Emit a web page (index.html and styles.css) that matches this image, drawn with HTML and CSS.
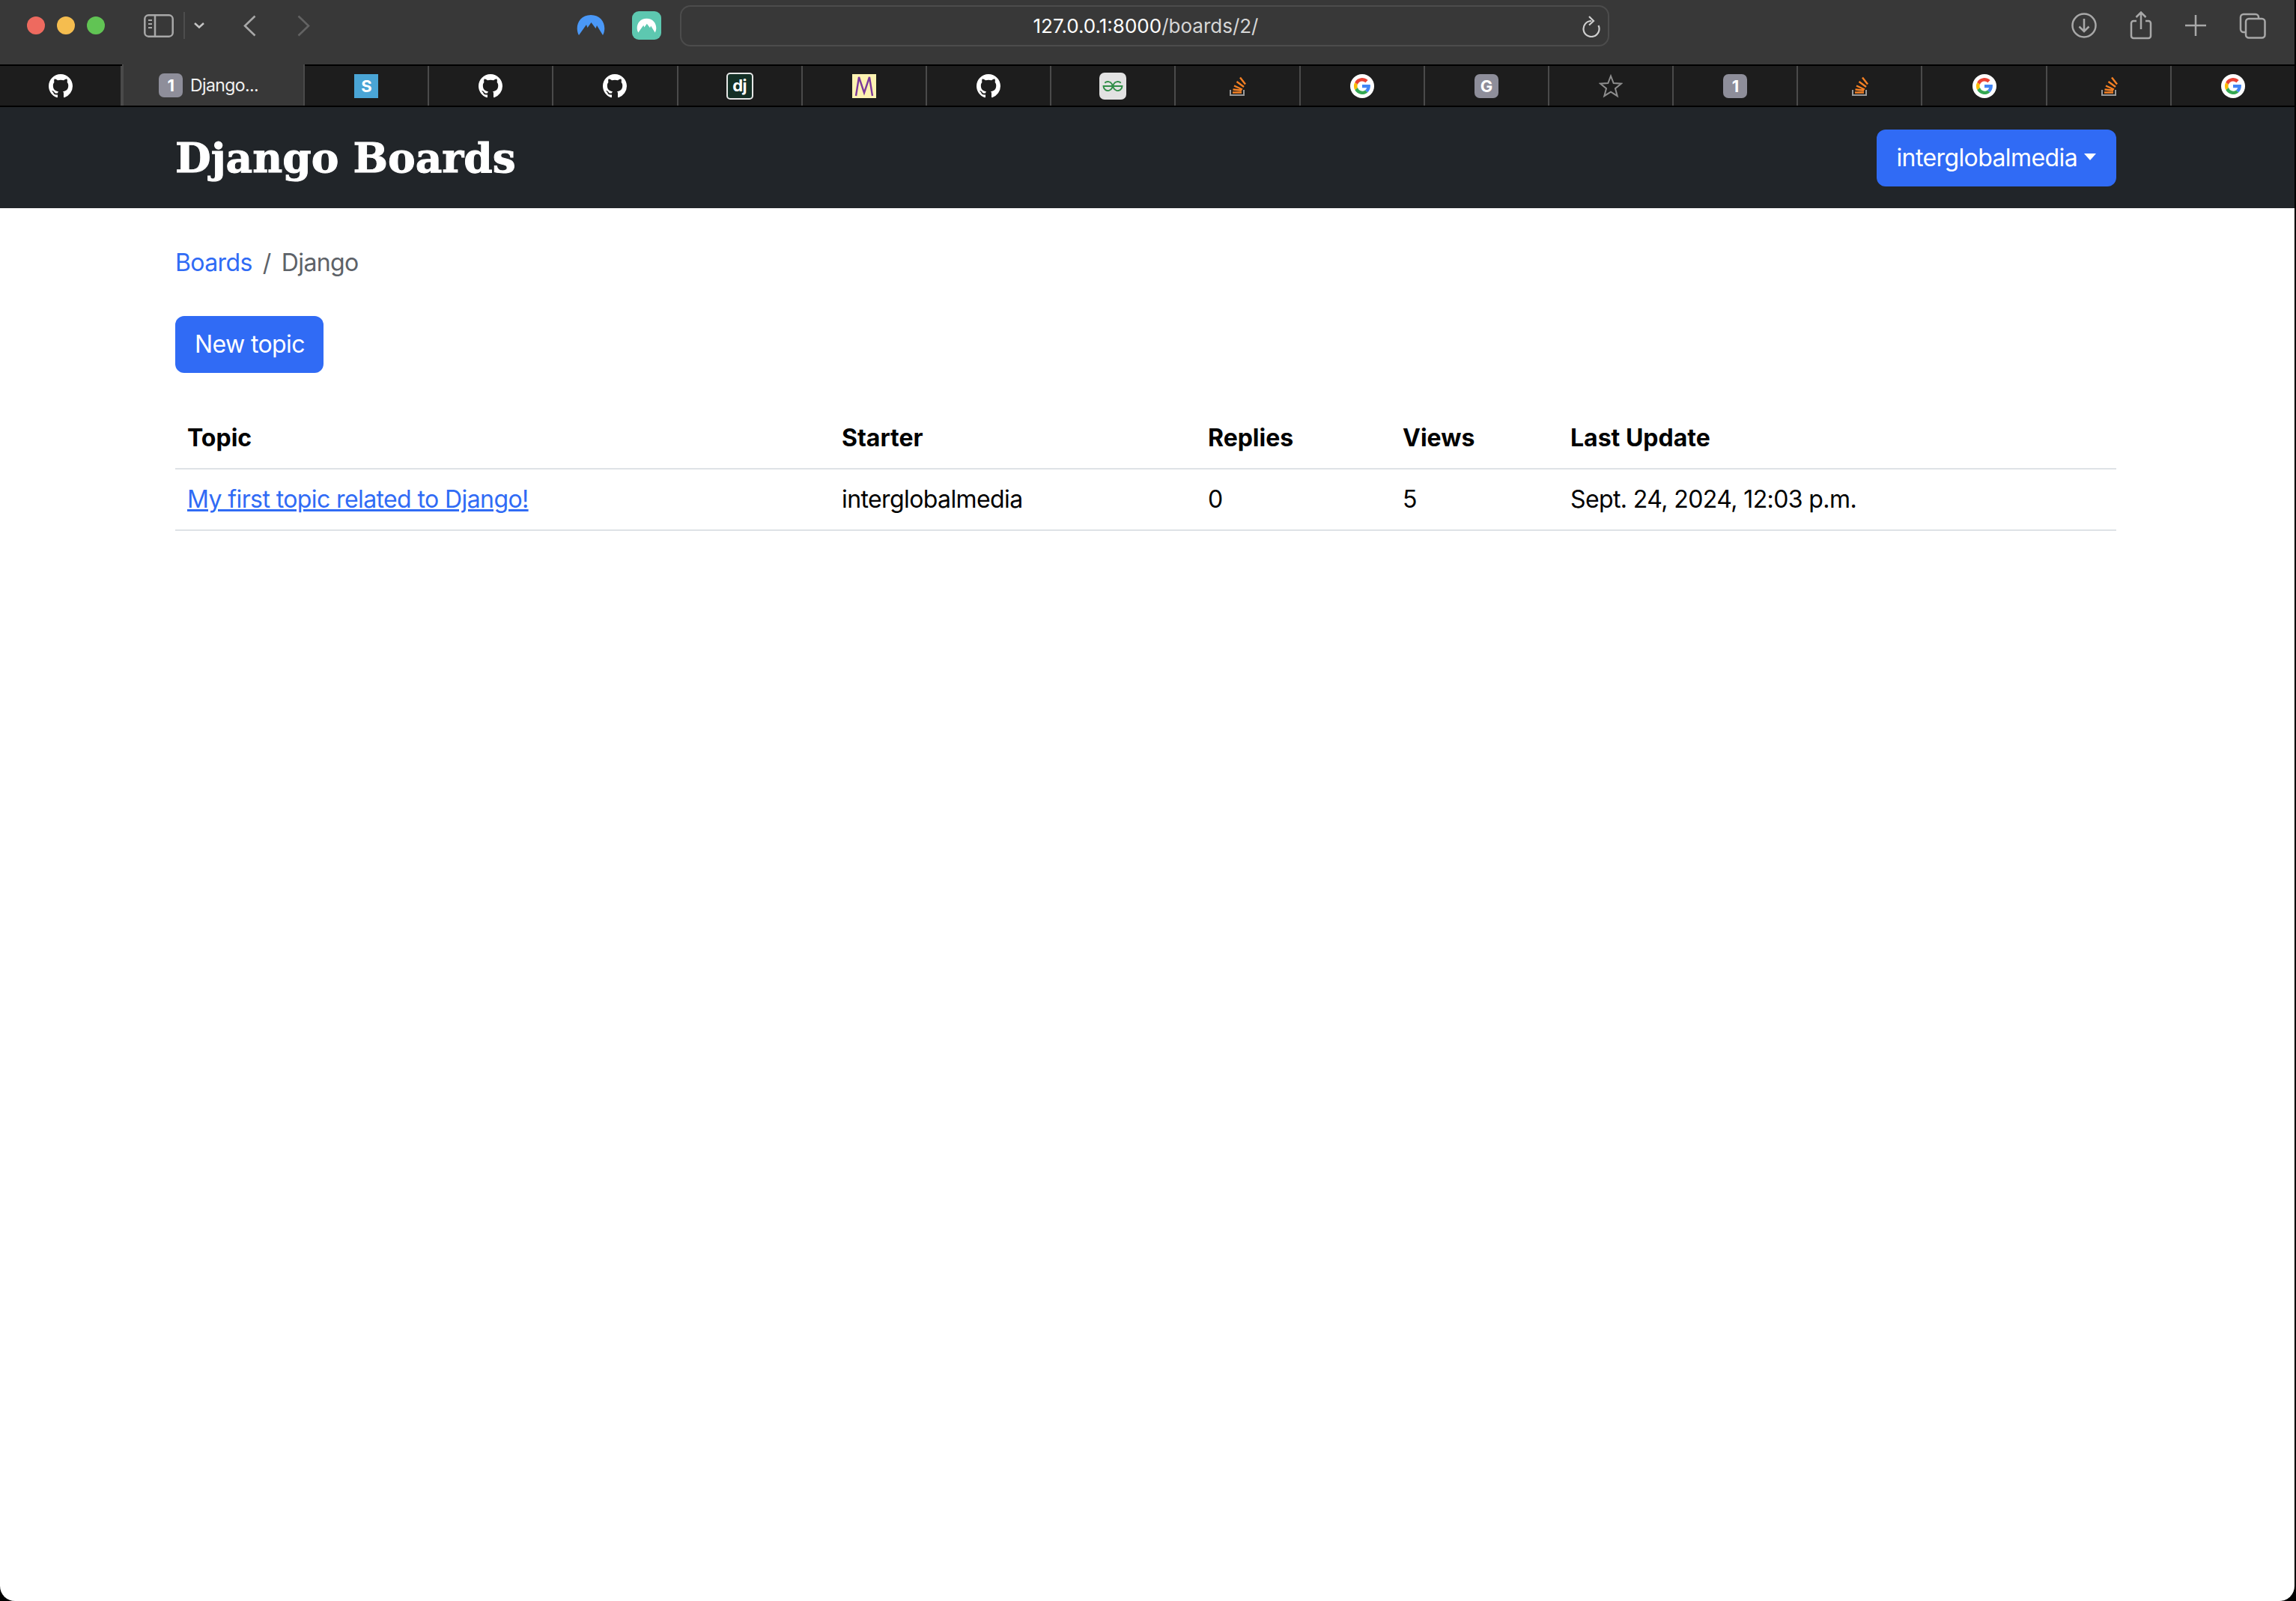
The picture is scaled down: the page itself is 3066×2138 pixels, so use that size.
FILE: index.html
```html
<!DOCTYPE html>
<html lang="en">
<head>
    <meta charset="UTF-8">
    <meta name="viewport" content="width=device-width, initial-scale=1.0">
    <title>Django Boards</title>
    <link rel="stylesheet" href="styles.css">
</head>
<body>
    <svg class="icon-defs" width="0" height="0" aria-hidden="true">
        <symbol id="gh" viewBox="0 0 16 16">
            <path fill="#fff" d="M8 0C3.58 0 0 3.58 0 8c0 3.54 2.29 6.53 5.47 7.59.4.07.55-.17.55-.38 0-.19-.01-.82-.01-1.49-2.01.37-2.53-.49-2.69-.94-.09-.23-.48-.94-.82-1.13-.28-.15-.68-.52-.01-.53.63-.01 1.08.58 1.23.82.72 1.21 1.87.87 2.33.66.07-.52.28-.87.51-1.07-1.78-.2-3.64-.89-3.64-3.95 0-.87.31-1.59.82-2.15-.08-.2-.36-1.02.08-2.12 0 0 .67-.21 2.2.82.64-.18 1.32-.27 2-.27.68 0 1.36.09 2 .27 1.53-1.04 2.2-.82 2.2-.82.44 1.1.16 1.92.08 2.12.51.56.82 1.27.82 2.15 0 3.07-1.87 3.75-3.65 3.95.29.25.54.73.54 1.48 0 1.07-.01 1.93-.01 2.2 0 .21.15.46.55.38A8.013 8.013 0 0016 8c0-4.42-3.58-8-8-8z"/>
        </symbol>
        <symbol id="goog" viewBox="0 0 32 32">
            <circle cx="16" cy="16" r="16" fill="#fff"/>
            <path d="M16 9.500a6.500 6.500 0 0 1 4.400 1.700l3.200-3.200A11 11 0 0 0 6.200 11l3.700 2.900A6.600 6.600 0 0 1 16 9.500z" fill="#ea4335"/>
            <path d="M9.900 18.100 6.200 21a11 11 0 0 0 17.200 3.200l-3.500-2.700A6.600 6.600 0 0 1 9.900 18.100z" fill="#34a853"/>
            <path d="M9.500 16c0-.7.100-1.400.4-2.100L6.200 11a11 11 0 0 0 0 10l3.700-2.900c-.3-.7-.4-1.400-.4-2.100z" fill="#fbbc05"/>
            <path d="M26.800 14H16v4.300h6.200a5.300 5.300 0 0 1-2.300 3.200l3.500 2.700c2.200-2 3.500-5 3.500-8.200 0-.7-.1-1.400-.1-2z" fill="#4285f4"/>
        </symbol>
        <symbol id="so" viewBox="0 0 32 32">
            <path d="M7 21v7h18v-7" fill="none" stroke="#9a9a9a" stroke-width="2"/>
            <path d="M10 24.500h12M10.500 20.500l11.500 1.200M12 15.500l11 5M15.500 10l9.500 7M20 4.500l7 9" fill="none" stroke="#f48024" stroke-width="2.400"/>
        </symbol>
        <symbol id="peak" viewBox="0 0 38 30">
            <path d="M3 28C-3 17 3 1 19 1c16 0 22 16 16 27L27 15l-1.500 4-6-8-5 7-1.500-4z"/>
        </symbol>
    </svg>

    <div class="window">
        <header class="toolbar">
            <div class="lights">
                <span class="light light-red"></span>
                <span class="light light-yellow"></span>
                <span class="light light-green"></span>
            </div>

            <div class="sidebar-btn">
                <svg width="40" height="31" viewBox="0 0 40 31" fill="none" stroke="#a8a8a8" stroke-width="2.500">
                    <rect x="1.300" y="1.300" width="37.400" height="28.400" rx="5"/>
                    <path d="M15 1.300v28.400"/>
                    <path d="M6 8h5M6 13h5M6 18h5" stroke-width="2"/>
                </svg>
                <span class="sidebar-divider"></span>
                <svg width="14" height="8" viewBox="0 0 14 8" fill="none" stroke="#c4c4c4" stroke-width="2.500">
                    <path d="M1 1l6 5.500L13 1"/>
                </svg>
            </div>

            <div class="history">
                <svg width="17" height="29" viewBox="0 0 17 29" fill="none" stroke="#a8a8a8" stroke-width="2.600">
                    <path d="M15.500 1.500 2 14.500l13.500 13"/>
                </svg>
                <svg width="17" height="29" viewBox="0 0 17 29" fill="none" stroke="#636363" stroke-width="2.600">
                    <path d="M1.500 1.500 15 14.500l-13.500 13"/>
                </svg>
            </div>

            <div class="extensions">
                <svg class="ext-blue" width="40" height="30"><use href="#peak"/></svg>
                <span class="ext-teal">
                    <svg width="27" height="21"><use href="#peak"/></svg>
                </span>
            </div>

            <div class="address-bar">
                <span class="address-text"><span class="address-host">127.0.0.1:8000</span>/boards/2/</span>
                <svg class="reload" width="24" height="29" viewBox="0 0 24 29" fill="none" stroke="#cfcfcf" stroke-width="2.200">
                    <path d="M12 7A10.500 10.500 0 1 0 21.500 13"/>
                    <path d="M9 1l6 6-6 5.500"/>
                </svg>
            </div>

            <div class="toolbar-actions">
                <svg width="34" height="34" viewBox="0 0 34 34" fill="none" stroke="#a8a8a8" stroke-width="2.500">
                    <circle cx="17" cy="17" r="15.500"/>
                    <path d="M17 8v17M10.500 18.500 17 25l6.500-6.500"/>
                </svg>
                <svg width="30" height="38" viewBox="0 0 30 38" fill="none" stroke="#a8a8a8" stroke-width="2.500">
                    <path d="M9 13H5a3 3 0 0 0-3 3v17a3 3 0 0 0 3 3h20a3 3 0 0 0 3-3V16a3 3 0 0 0-3-3h-4"/>
                    <path d="M15 24V2M8.500 8 15 1.500 21.500 8"/>
                </svg>
                <svg width="28" height="28" viewBox="0 0 28 28" fill="none" stroke="#a8a8a8" stroke-width="2.500">
                    <path d="M14 0v28M0 14h28"/>
                </svg>
                <svg width="36" height="35" viewBox="0 0 36 35" fill="none" stroke="#a8a8a8" stroke-width="2.500">
                    <rect x="9" y="8" width="25.500" height="25.500" rx="4"/>
                    <path d="M9 26H6a4 4 0 0 1-4-4V6a4 4 0 0 1 4-4h16a4 4 0 0 1 4 4v2"/>
                </svg>
            </div>
        </header>

        <nav class="tab-bar">
            <div class="tab tab-first"><svg class="fav"><use href="#gh"/></svg></div>
            <div class="tab tab-active">
                <span class="badge">1</span>
                <span class="tab-title">Django...</span>
            </div>
            <div class="tab"><span class="fav-s">S</span></div>
            <div class="tab"><svg class="fav"><use href="#gh"/></svg></div>
            <div class="tab"><svg class="fav"><use href="#gh"/></svg></div>
            <div class="tab"><span class="fav-dj">dj</span></div>
            <div class="tab">
                <svg class="fav" viewBox="0 0 32 32">
                    <rect x="0" width="32" height="32" fill="#fef3b2"/>
                    <path d="M5 29 9 4l7 21 7-21 4 25" fill="none" stroke="#7c3a9c" stroke-width="2.400"/>
                </svg>
            </div>
            <div class="tab"><svg class="fav"><use href="#gh"/></svg></div>
            <div class="tab">
                <span class="fav-gfg">
                    <svg width="28" height="14" viewBox="0 0 28 14" fill="none" stroke="#2f8d46" stroke-width="1.900">
                        <path d="M14 7h12.500a6 6 0 1 1-1.800-4.200M14 7H1.500a6 6 0 1 0 1.800-4.200"/>
                    </svg>
                </span>
            </div>
            <div class="tab"><svg class="fav"><use href="#so"/></svg></div>
            <div class="tab"><svg class="fav"><use href="#goog"/></svg></div>
            <div class="tab"><span class="badge">G</span></div>
            <div class="tab">
                <svg class="fav" viewBox="0 0 32 32">
                    <path d="M16 2.500l3.700 9.600 10.300.6-8 6.500 2.700 10-8.700-5.600-8.700 5.600 2.700-10-8-6.500 10.300-.6z" fill="none" stroke="#8e8e8e" stroke-width="2"/>
                </svg>
            </div>
            <div class="tab"><span class="badge">1</span></div>
            <div class="tab"><svg class="fav"><use href="#so"/></svg></div>
            <div class="tab"><svg class="fav"><use href="#goog"/></svg></div>
            <div class="tab"><svg class="fav"><use href="#so"/></svg></div>
            <div class="tab"><svg class="fav"><use href="#goog"/></svg></div>
        </nav>

        <div class="navbar">
            <a class="brand" href="#">Django Boards</a>
            <button class="btn user-btn">interglobalmedia<span class="caret"></span></button>
        </div>

        <main class="content">
            <ol class="breadcrumb">
                <li><a href="#">Boards</a></li>
                <li class="crumb-sep">/</li>
                <li class="crumb-active">Django</li>
            </ol>

            <a class="btn new-topic" href="#">New topic</a>

            <table class="topics">
                <colgroup>
                    <col class="col-topic">
                    <col class="col-starter">
                    <col class="col-replies">
                    <col class="col-views">
                    <col>
                </colgroup>
                <thead>
                    <tr>
                        <th>Topic</th>
                        <th>Starter</th>
                        <th>Replies</th>
                        <th>Views</th>
                        <th>Last Update</th>
                    </tr>
                </thead>
                <tbody>
                    <tr>
                        <td><a href="#">My first topic related to Django!</a></td>
                        <td>interglobalmedia</td>
                        <td>0</td>
                        <td>5</td>
                        <td>Sept. 24, 2024, 12:03 p.m.</td>
                    </tr>
                </tbody>
            </table>
        </main>
    </div>
</body>
</html>
```

FILE: styles.css
```css
:root {
    --chrome: #383838;
    --tab-dark: #1d1d1d;
    --tab-line: #4a4a4a;
    --navbar: #212529;
    --blue: #306bf5;
    --rule: #dee2e6;
}

* {
    box-sizing: border-box;
}

html, body {
    height: 100%;
}

body {
    margin: 0;
    background: #000;
    font-family: Inter, 'Noto Sans', sans-serif;
    font-size: 32px;
    line-height: 48px;
    letter-spacing: -0.6px;
    color: #000;
}

.icon-defs {
    display: block;
    height: 0;
}

.window {
    height: 100%;
    margin-right: 2px;
    background: #fff;
    border-radius: 0 0 20px 20px;
    overflow: hidden;
}

/* browser toolbar */
.toolbar {
    display: flex;
    align-items: center;
    height: 86px;
    padding-bottom: 18px;
    background: var(--chrome);
}

.lights {
    display: flex;
    gap: 16px;
    margin-left: 36px;
}

.light {
    width: 24px;
    height: 24px;
    border-radius: 50%;
}

.light-red { background: #ee6a5f; }
.light-yellow { background: #f5bd4f; }
.light-green { background: #61c454; }

.sidebar-btn {
    display: flex;
    align-items: center;
    margin-left: 52px;
}

.sidebar-divider {
    width: 2px;
    height: 36px;
    margin: 0 12px 0 13px;
    background: #4d4d4d;
}

.history {
    display: flex;
    gap: 55px;
    margin-left: 52px;
}

.extensions {
    display: flex;
    align-items: center;
    gap: 35px;
    margin-left: 355px;
}

.ext-blue {
    fill: #4a98f7;
}

.ext-teal {
    display: flex;
    align-items: center;
    justify-content: center;
    width: 39px;
    height: 38px;
    background: #5dc8b0;
    border-radius: 9px;
    fill: #fff;
}

.address-bar {
    position: relative;
    width: 1241px;
    height: 55px;
    margin-left: 25px;
    padding-left: 3px;
    border: 2px solid #4c4c4c;
    border-radius: 14px;
    text-align: center;
    font-size: 26px;
    line-height: 51px;
    letter-spacing: 0;
    color: #d6d6d6;
}

.address-host {
    color: #fff;
}

.reload {
    position: absolute;
    top: 12px;
    right: 10px;
}

.toolbar-actions {
    display: flex;
    align-items: center;
    gap: 44px;
    margin-left: 617px;
}

/* tab strip */
.tab-bar {
    display: flex;
    height: 57px;
    background: var(--tab-dark);
    border-top: 2px solid #000;
    border-bottom: 2px solid #000;
}

.tab {
    flex: 1;
    display: flex;
    align-items: center;
    justify-content: center;
    border-right: 2px solid var(--tab-line);
}

.tab:last-child {
    border-right: 0;
}

.tab-first {
    flex: 0 0 163px;
}

.tab-active {
    flex: 0 0 244px;
    justify-content: flex-start;
    gap: 10px;
    margin-top: -2px;
    padding-left: 47px;
    background: var(--chrome);
    border-left: 2px solid var(--tab-line);
}

.tab-title {
    font-size: 23px;
    line-height: 32px;
    color: #f2f2f2;
}

.fav {
    width: 32px;
    height: 32px;
}

.badge {
    width: 32px;
    height: 32px;
    background: #8e8e9a;
    border-radius: 7px;
    text-align: center;
    font-size: 22px;
    font-weight: 700;
    line-height: 32px;
    color: #fff;
}

.fav-s {
    width: 32px;
    height: 32px;
    background: #4aa5d6;
    text-align: center;
    font-size: 22px;
    font-weight: 700;
    line-height: 32px;
    color: #fff;
}

.fav-dj {
    width: 36px;
    height: 36px;
    background: #143026;
    border: 2px solid #e6e6e6;
    border-radius: 5px;
    text-align: center;
    font-size: 22px;
    font-weight: 700;
    line-height: 30px;
    color: #fff;
}

.fav-gfg {
    display: flex;
    align-items: center;
    justify-content: center;
    width: 36px;
    height: 36px;
    background: #e2e2e2;
    border-radius: 7px;
}

/* site navbar */
.navbar {
    display: flex;
    align-items: center;
    justify-content: space-between;
    height: 135px;
    padding: 0 238px 0 234px;
    background: var(--navbar);
}

.brand {
    font-family: 'DejaVu Serif', serif;
    font-size: 55px;
    font-weight: 700;
    letter-spacing: 0;
    -webkit-text-stroke: 1px #fff;
    color: #fff;
    text-decoration: none;
}

.btn {
    display: inline-block;
    height: 76px;
    padding: 0 27px 0 26px;
    background: var(--blue);
    border: 0;
    border-radius: 12px;
    font: inherit;
    line-height: 76px;
    letter-spacing: inherit;
    color: #fff;
    text-decoration: none;
}

.new-topic {
    padding: 0 25px 0 26px;
}

.caret {
    display: inline-block;
    margin-left: 9px;
    vertical-align: 8px;
    border-top: 9px solid #fff;
    border-left: 8.5px solid transparent;
    border-right: 8.5px solid transparent;
}

/* page content */
.content {
    padding: 49px 238px 0 234px;
}

.breadcrumb {
    display: flex;
    gap: 14px;
    margin: 0 0 47px;
    padding: 0;
    list-style: none;
}

.breadcrumb a {
    color: var(--blue);
    text-decoration: none;
}

.crumb-sep,
.crumb-active {
    color: #5d6268;
}

.topics {
    width: 100%;
    margin-top: 47px;
    border-collapse: collapse;
    table-layout: fixed;
}

.col-topic { width: 874px; }
.col-starter { width: 489px; }
.col-replies { width: 260px; }
.col-views { width: 224px; }

.topics th,
.topics td {
    padding: 16px;
    border-bottom: 2px solid var(--rule);
    text-align: left;
    white-space: nowrap;
}

.topics th {
    letter-spacing: 0;
}

.topics a {
    color: var(--blue);
}
```
